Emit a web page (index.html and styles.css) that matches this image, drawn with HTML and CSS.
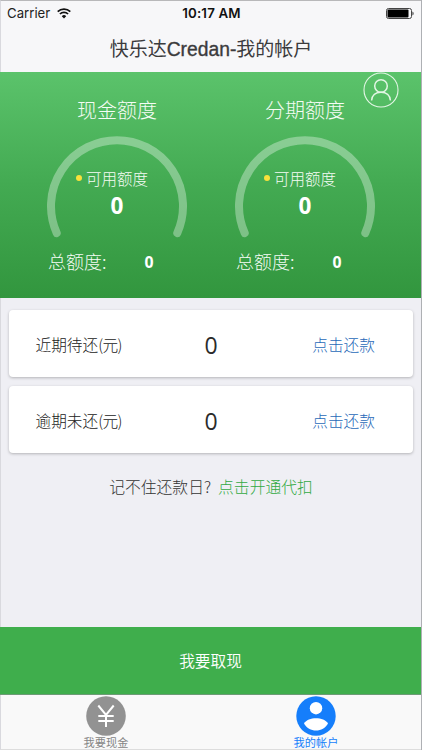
FILE: index.html
```html
<!DOCTYPE html>
<html lang="zh-CN">
<head>
<meta charset="utf-8">
<title>快乐达Credan-我的帐户</title>
<link rel="stylesheet" href="styles.css">
</head>
<body>
<div class="app">
  <div class="status">
    <div class="carrier"><span>Carrier</span>
      <svg width="14" height="11" viewBox="0 0 14 11" fill="none" stroke="#111" stroke-width="1.7"><path d="M.7 3.7a9 9 0 0 1 12.6 0M2.9 6a5.9 5.9 0 0 1 8.2 0"/><path d="M7 10.6 4.8 8.2a3.1 3.1 0 0 1 4.4 0z" fill="#111" stroke="none"/></svg>
    </div>
    <time class="clock">10:17 AM</time>
    <svg class="battery" width="28" height="11" viewBox="0 0 28 11"><rect x=".5" y=".5" width="25" height="10" rx="2" fill="none" stroke="#444"/><rect x="1.5" y="1.5" width="21" height="8" rx="1" fill="#000"/><path d="M26.500 3.500v4c1.400-.6 1.400-3.400 0-4z" fill="#222"/></svg>
  </div>
  <header class="title">快乐达<span class="brand">Credan-</span>我的帐户</header>
  <section class="quota">
    <svg class="profile" width="36" height="36" viewBox="0 0 36 36" fill="none" stroke="#e3f6e5"><circle cx="18" cy="18" r="17" stroke-width="1.1"/><circle cx="18" cy="14" r="6.300" stroke-width="1.500"/><path d="M8.600 28.500c.3-5.200 4.100-8.300 9.400-8.300s9.100 3.100 9.400 8.300" stroke-width="1.500"/></svg>
    <div class="gauge">
      <h2>现金额度</h2>
      <div class="dial">
        <svg width="140" height="104" viewBox="0 0 140 104"><path d="M9.700 97A66 66 0 1 1 130.300 97" fill="none" stroke="#fff" stroke-opacity=".34" stroke-width="8" stroke-linecap="round"/></svg>
        <div class="reading"><div class="available"><i></i>可用额度</div><strong>0</strong></div>
      </div>
      <div class="total"><span>总额度:</span><b>0</b></div>
    </div>
    <div class="gauge">
      <h2>分期额度</h2>
      <div class="dial">
        <svg width="140" height="104" viewBox="0 0 140 104"><path d="M9.700 97A66 66 0 1 1 130.300 97" fill="none" stroke="#fff" stroke-opacity=".34" stroke-width="8" stroke-linecap="round"/></svg>
        <div class="reading"><div class="available"><i></i>可用额度</div><strong>0</strong></div>
      </div>
      <div class="total"><span>总额度:</span><b>0</b></div>
    </div>
  </section>
  <main class="content">
    <div class="card"><span class="label">近期待还<span class="unit">(元)</span></span><span class="amount">0</span><a class="pay">点击还款</a></div>
    <div class="card"><span class="label">逾期未还<span class="unit">(元)</span></span><span class="amount">0</span><a class="pay">点击还款</a></div>
    <p class="hint"><span>记不住还款日?</span><a>点击开通代扣</a></p>
  </main>
  <button class="withdraw">我要取现</button>
  <nav class="tabs">
    <div class="tab">
      <svg width="40" height="40" viewBox="0 0 40 40"><circle cx="20" cy="20" r="19.800" fill="#929292"/><path d="M12.300 9.500 20 18.900 27.700 9.500M20 18.600V31M12.300 20h15.400M12.300 25h15.400" fill="none" stroke="#fff" stroke-width="2"/></svg>
      <span>我要现金</span>
    </div>
    <div class="tab active">
      <svg width="40" height="40" viewBox="0 0 40 40"><circle cx="20" cy="20" r="19.700" fill="#157efb"/><circle cx="20" cy="12.200" r="6.200" fill="#fff"/><path d="M8 27.500c2-3.500 7-5.300 12-5.300s10 1.800 12 5.300c-2.500 4.500-7 7-12 7s-9.500-2.500-12-7z" fill="#fff"/></svg>
      <span>我的帐户</span>
    </div>
  </nav>
</div>
</body>
</html>
```
FILE: styles.css
```css
* { box-sizing: border-box; }
body { margin: 0; font-family: "Noto Sans CJK SC", sans-serif; }
.app {
  width: 422px; height: 750px; overflow: hidden;
  display: flex; flex-direction: column;
  background: #efeff4; border-right: 1px solid #aeb0b4;
}
.status, .title, .content, .tabs { border-left: 1px solid #d9d9de; }
.status {
  height: 24px; flex: none; padding: 1px 7px 0 6px;
  display: grid; grid-template-columns: 1fr auto 1fr; align-items: center;
  background: #f7f7f9; border-top: 1px solid #b8b8ba;
  font: 13.200px/22px Inter, sans-serif; color: #222;
}
.carrier { display: flex; align-items: center; gap: 7px; }
.clock { margin-left: 2px; font-size: 13.300px; font-weight: 600; letter-spacing: .15px; color: #111; }
.battery { justify-self: end; }
.title {
  height: 48px; flex: none; background: #f7f7f9;
  font-size: 19px; line-height: 48px; text-align: center; color: #3b3b3d;
}
.brand { font-family: "Liberation Sans", sans-serif; font-size: 19.300px; -webkit-text-stroke: .35px #3b3b3d; }
.quota {
  position: relative; height: 226px; flex: none;
  padding: 0 22px 0 23px; display: flex;
  background: linear-gradient(#5bc36b, #43aa52 50%, #32963e);
  color: #f5fcf5;
}
.profile { position: absolute; top: 0; right: 22px; }
.gauge { width: 188px; display: flex; flex-direction: column; align-items: center; }
.gauge h2 { margin: 23px 0 0; font-size: 20px; line-height: 29px; font-weight: 300; }
.dial { position: relative; width: 140px; height: 104px; margin-top: 12px; }
.dial svg { display: block; }
.reading {
  position: absolute; inset: 30px 0 0;
  display: flex; flex-direction: column; align-items: center;
}
.available {
  display: flex; align-items: center; gap: 4px; margin-right: 10px;
  font-size: 15.500px; line-height: 24px; font-weight: 300;
}
.available i { width: 6px; height: 6px; border-radius: 50%; background: #f9e13b; }
.reading strong { margin-top: 1px; font: 700 22.500px/30px "Open Sans", "Noto Sans", sans-serif; color: #fff; }
.total {
  align-self: stretch; height: 30px; margin-top: 6px; padding-left: 25px;
  display: flex; align-items: center; gap: 38px;
  font-size: 18px; font-weight: 300;
}
.total b { padding-top: 2px; font: 700 15.800px/24px "Open Sans", "Noto Sans", sans-serif; color: #fff; }
.content { flex: 1; padding: 12px 8px 0; }
.card {
  height: 67px; margin-bottom: 9px; padding: 2px 38px 0 27px;
  display: grid; grid-template-columns: 1fr 26px 1fr; align-items: center;
  background: #fff; border-radius: 4px; box-shadow: 0 1px 3px rgba(0, 0, 0, .25);
}
.label { margin: 0 -6px 0 -.5px; font-size: 15.700px; font-weight: 300; color: #222; }
.unit { letter-spacing: -.7px; }
.amount { margin-left: 11px; text-align: center; font: 400 23px/30px "Open Sans", "Noto Sans", sans-serif; color: #2b2b2b; }
.pay { justify-self: end; font-size: 15.700px; font-weight: 300; color: #1f69b8; }
.hint {
  margin: 22px 0 0; display: flex; justify-content: center; gap: 7px;
  font-size: 15.800px; line-height: 24px; font-weight: 300; color: #333;
}
.hint a { color: #32aa43; }
.withdraw {
  height: 68px; flex: none; border: 0; border-bottom: 1px solid #6d9b76;
  background: #3fae4c; color: #fff; font: 350 15.700px/24px "Noto Sans CJK SC", sans-serif;
}
.tabs { height: 55px; flex: none; display: flex; background: #f9f9f9; border-bottom: 1px solid #ddd; }
.tab {
  flex: 1; display: flex; flex-direction: column; align-items: center;
  padding-top: 1px; font-size: 11.200px; line-height: 12px; color: #858585;
}
.tab svg { flex: none; }
.tab.active { color: #157efb; }
```
